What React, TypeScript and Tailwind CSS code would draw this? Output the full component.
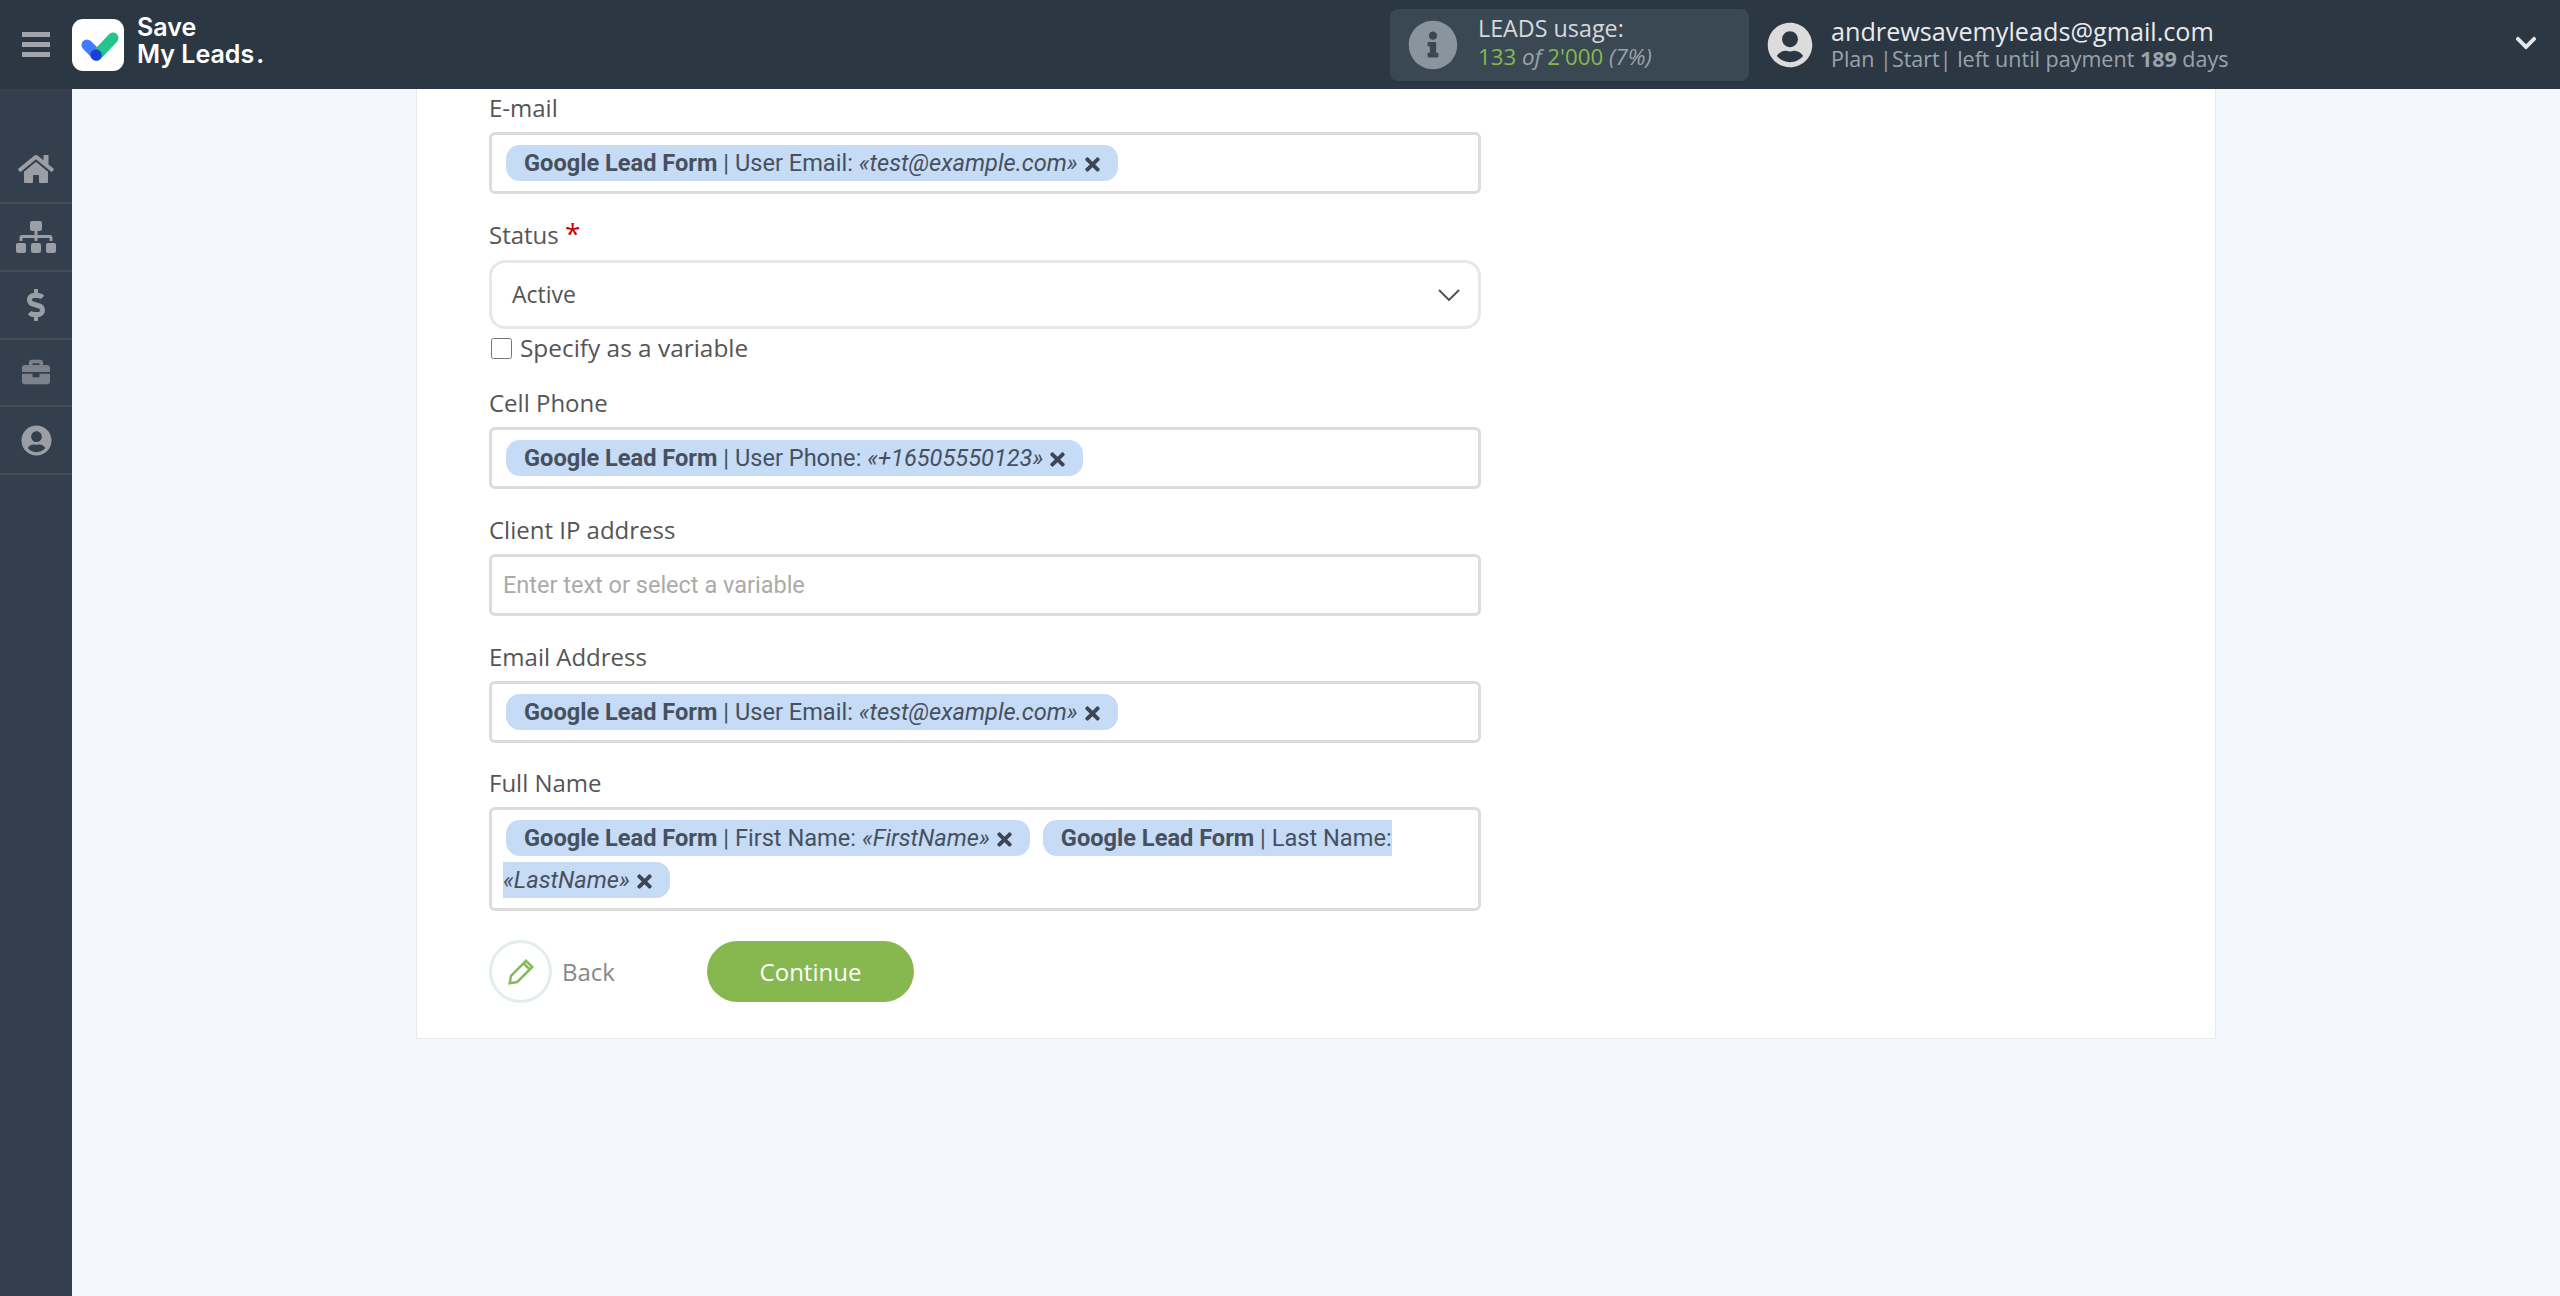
import React from "react";
import { FaHome, FaSitemap, FaDollarSign, FaBriefcase, FaUserCircle, FaInfoCircle, FaTimes, FaChevronDown } from "react-icons/fa";

const chipClass = "bg-[#c6dbf5] rounded-[14px] pl-[18px] pr-[15px] py-[4px] text-[#47505e] [font-family:Roboto,sans-serif] text-[23.6px]";

function X() {
  return <FaTimes className="inline-block w-[21px] h-[21px] ml-[4px] align-[-4px] text-[#3c4654]" />;
}

function Chip({ field, value, ml = "ml-[3px]" }: { field: string; value: string; ml?: string }) {
  return (
    <span className={`${chipClass} ${ml}`}>
      <span className="font-bold">Google Lead Form</span> | {field}: <i>«{value}»</i>
      <X />
    </span>
  );
}

function Label({ children, top = "mt-[24px]", bottom = "mb-[7px]" }: { children: React.ReactNode; top?: string; bottom?: string }) {
  return (
    <div className={`${top} ${bottom} h-[34px] leading-[34px] text-[24px] text-[#555]`}>{children}</div>
  );
}

function Box({ children }: { children?: React.ReactNode }) {
  return (
    <div className="min-h-[61.5px] border-[3px] border-[#dcdcdc] rounded-[6px] bg-white pl-[11px] pr-[8px] py-[7px] leading-[41px] text-[23.5px]">
      {children}
    </div>
  );
}

function Side({ children }: { children: React.ReactNode }) {
  return (
    <div className="h-[67.75px] flex items-center justify-center border-b-2 border-[#424d5a] text-[#9a9fa6]">
      {children}
    </div>
  );
}

export default function App() {
  return (
    <div className="h-[1296px] flex flex-col bg-[#f4f7fc] overflow-hidden [font-family:'Open_Sans',sans-serif]">
      <header className="h-[89px] shrink-0 bg-[#2c3744] flex items-center">
        <div className="w-[72px] flex flex-col items-center gap-[5px]">
          <div className="w-[28px] h-[5px] bg-[#a0a5ab]" />
          <div className="w-[28px] h-[5px] bg-[#a0a5ab]" />
          <div className="w-[28px] h-[5px] bg-[#a0a5ab]" />
        </div>
        <div className="w-[52px] h-[52px] bg-white rounded-[11px] flex items-center justify-center">
          <svg width="52" height="52" viewBox="0 0 52 52">
            <path d="M15 26 L25 36" stroke="#3f7bfa" strokeWidth="11" strokeLinecap="round" />
            <path d="M25 36 L41 19" stroke="#22c58b" strokeWidth="11" strokeLinecap="round" />
            <circle cx="24" cy="36" r="5.7" fill="#1d3fd8" />
          </svg>
        </div>
        <div className="ml-[13px] -mt-[7px] text-white font-semibold text-[25px] leading-[27px] [font-family:Inter,sans-serif]">
          <div>Save</div>
          <div>My Leads<span className="ml-[2px]">.</span></div>
        </div>
        <div className="ml-auto w-[359px] h-[72px] bg-[#3a4853] rounded-[8px] flex items-center pl-[18px]">
          <FaInfoCircle className="w-[50px] h-[50px] text-[#8a949c]" />
          <div className="ml-[20px] -mt-[3px]">
            <div className="text-[23.3px] leading-[27px] text-[#d5d9dc]">LEADS usage:</div>
            <div className="text-[22.3px] leading-[28px] text-[#86b84f] mt-[1px]">
              133 <i className="text-[#9aa3ab]">of</i> 2'000 <i className="text-[#9aa3ab]">(7%)</i>
            </div>
          </div>
        </div>
        <FaUserCircle className="ml-[18px] w-[46px] h-[46px] text-[#dcdcdc]" />
        <div className="ml-[18px] w-[682px]">
          <div className="text-[25.2px] leading-[26px] text-[#e8eaec]">andrewsavemyleads@gmail.com</div>
          <div className="text-[21.5px] leading-[26px] mt-[2px] text-[#9aa3ab]">
            Plan |Start| left until payment <b>189</b> days
          </div>
        </div>
        <FaChevronDown className="w-[26px] h-[24px] -mt-[3px] text-[#e5e7eb] mr-[21px]" />
      </header>
      <div className="flex flex-1">
        <aside className="w-[72px] shrink-0 bg-[#343f4d] pt-[47.25px]">
          <Side><FaHome className="w-[36px] h-[32px]" /></Side>
          <Side><FaSitemap className="w-[40px] h-[32px]" /></Side>
          <Side><FaDollarSign className="w-[20px] h-[32px]" /></Side>
          <Side><FaBriefcase className="w-[32px] h-[28px] text-[#7c828b]" /></Side>
          <Side><FaUserCircle className="w-[31px] h-[31px]" /></Side>
        </aside>
        <main className="flex-1">
          <div className="mx-auto w-[1800px] h-[950px] bg-white border border-t-0 border-[#e6e9ee] pl-[72px] pt-[2px]">
            <div className="w-[992px]">
              <Label top="mt-0">E-mail</Label>
              <Box><Chip field="User Email" value="test@example.com" /></Box>
              <Label bottom="mb-[8px]">
                Status <span className="text-[#c00] text-[28px] leading-none">*</span>
              </Label>
              <div className="h-[69px] border-[3px] border-[#e5e7eb] rounded-[16px] flex items-center justify-between pl-[20px] pr-[18px] text-[23px] text-[#555]">
                <span>Active</span>
                <svg width="22" height="12" viewBox="0 0 22 12" fill="none" stroke="#555" strokeWidth="2">
                  <path d="M1 1 L11 11 L21 1" />
                </svg>
              </div>
              <label className="mt-[8px] flex items-center h-[22px] text-[24.4px] text-[#555]">
                <input type="checkbox" className="ml-[2px] w-[21px] h-[21px]" />
                <span className="ml-[8px]">Specify as a variable</span>
              </label>
              <Label top="mt-[27px]">Cell Phone</Label>
              <Box><Chip field="User Phone" value="+16505550123" /></Box>
              <Label>Client IP address</Label>
              <Box><span className="[font-family:Roboto,sans-serif] text-[#aaa]">Enter text or select a variable</span></Box>
              <Label>Email Address</Label>
              <Box><Chip field="User Email" value="test@example.com" /></Box>
              <Label top="mt-[23px]">Full Name</Label>
              <Box>
                <Chip field="First Name" value="FirstName" />
                <Chip field="Last Name" value="LastName" ml="ml-[13px]" />
              </Box>
              <div className="mt-[29px] flex items-center">
                <div className="w-[63px] h-[63px] rounded-full border-[3px] border-[#e3eded] flex items-center justify-center">
                  <svg width="30" height="30" viewBox="0 0 24 24" fill="none" stroke="#86bb5c" strokeWidth="2">
                    <path d="M3 21l1-6L16 3l5 5L9 20z" />
                    <path d="M14 5l5 5" />
                  </svg>
                </div>
                <span className="ml-[10px] w-[145px] text-[24px] text-[#888]">Back</span>
                <button className="w-[207px] h-[61px] rounded-full bg-[#86b84f] text-white text-[24px]">Continue</button>
              </div>
            </div>
          </div>
        </main>
      </div>
    </div>
  );
}
